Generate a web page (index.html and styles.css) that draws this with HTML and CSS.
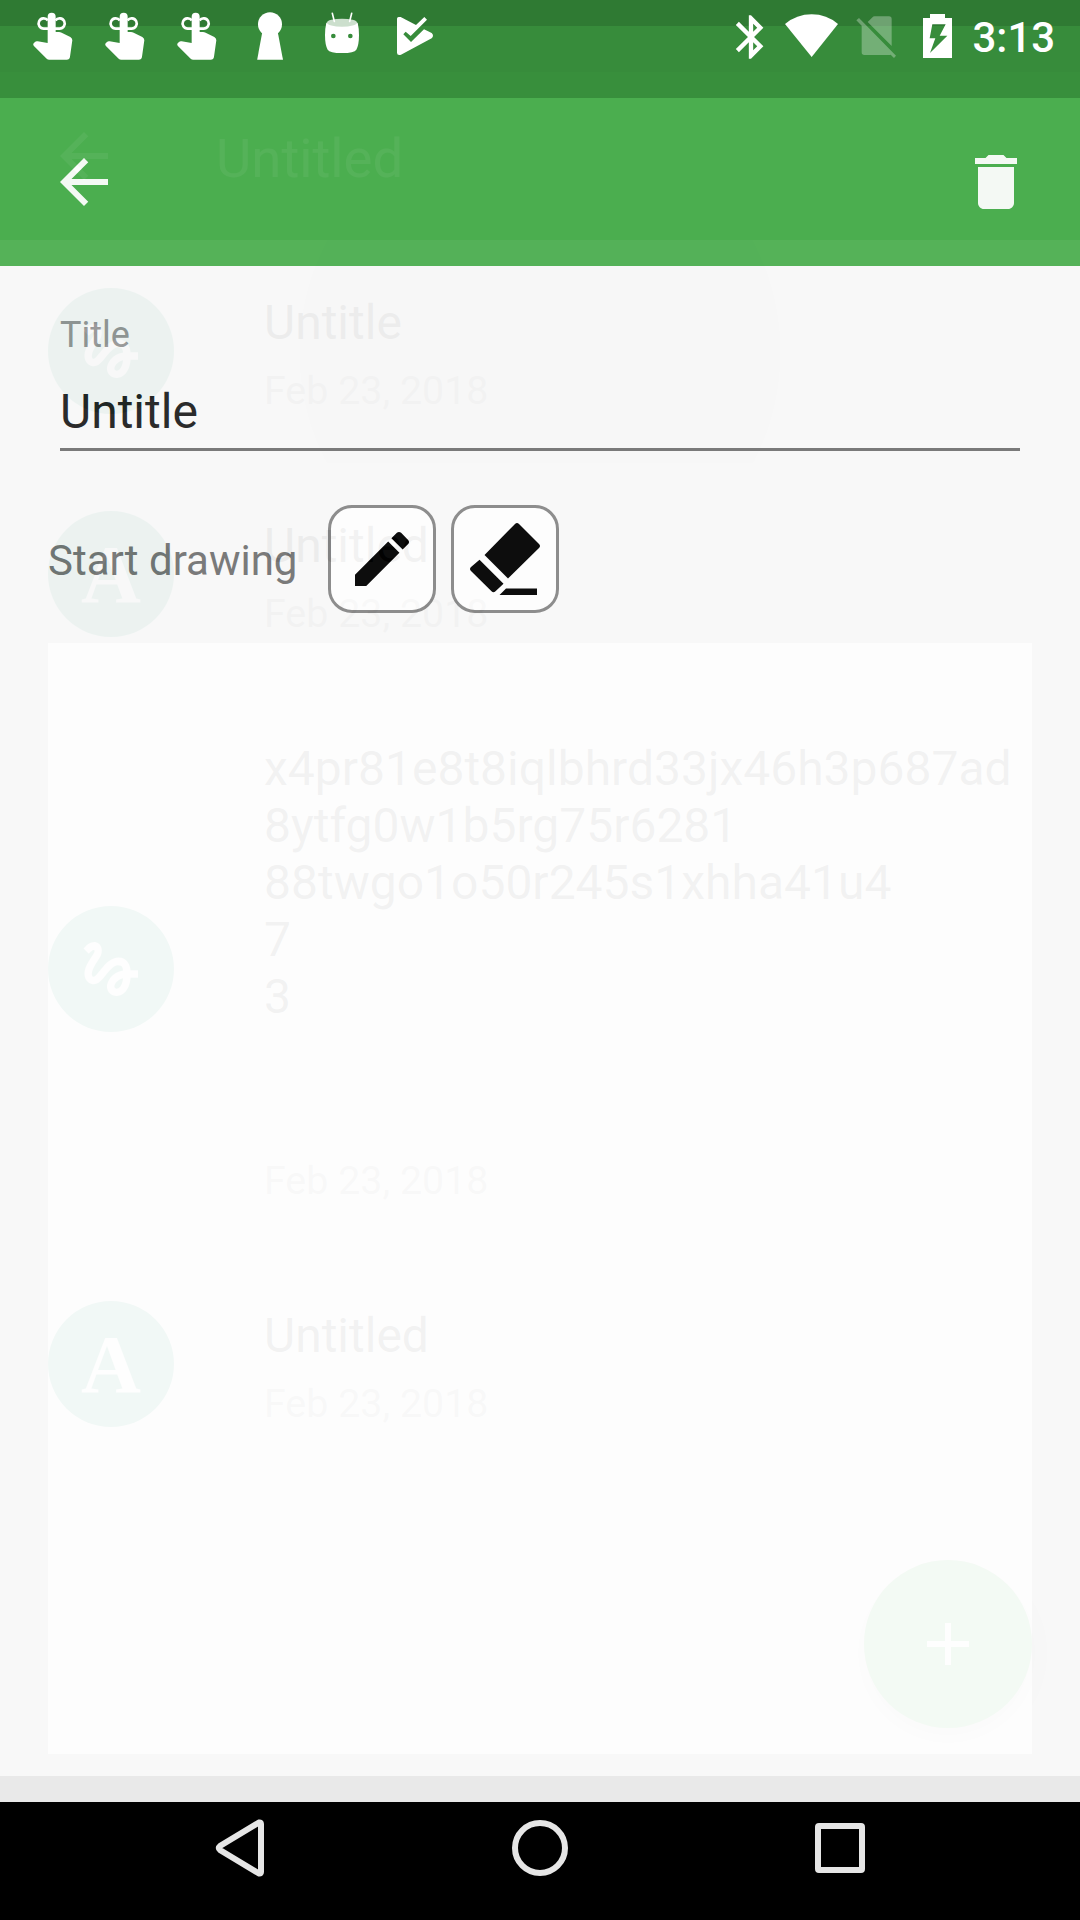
FILE: index.html
```html
<!DOCTYPE html>
<html lang="en">
<head>
<meta charset="utf-8">
<title>Notes</title>
<link rel="stylesheet" href="styles.css">
</head>
<body>
<svg class="defs" aria-hidden="true">
  <symbol id="back" viewBox="0 0 24 24"><path d="M20 11H7.830l5.590-5.590L12 4l-8 8 8 8 1.410-1.410L7.830 13H20v-2z"/></symbol>
  <symbol id="gesture" viewBox="0 0 24 24"><path d="M4.59 6.89c.7-.71 1.4-1.35 1.71-1.22.5.2 0 1.03-.3 1.52-.25.42-2.86 3.89-2.86 6.31 0 1.28.48 2.34 1.34 2.98.75.56 1.74.73 2.64.46 1.07-.31 1.95-1.4 3.06-2.77 1.21-1.49 2.83-3.44 4.08-3.44 1.63 0 1.65 1.01 1.76 1.79-3.78.64-5.38 3.67-5.38 5.37 0 1.7 1.44 3.09 3.21 3.09 1.63 0 4.29-1.33 4.69-6.1H21v-2.5h-2.47c-.15-1.65-1.09-4.2-4.03-4.2-2.25 0-4.18 1.91-4.94 2.84-.58.73-2.06 2.48-2.29 2.72-.25.3-.68.84-1.11.84-.45 0-.72-.83-.36-1.92.35-1.09 1.4-2.86 1.85-3.52.78-1.14 1.3-1.92 1.3-3.28C8.95 3.69 7.31 3 6.44 3 5.12 3 3.97 4 3.72 4.25c-.36.36-.66.66-.88.93l1.75 1.71zm9.29 11.66c-.31 0-.74-.26-.74-.72 0-.6.73-2.2 2.87-2.76-.3 2.69-1.43 3.48-2.13 3.48z"/></symbol>
  <symbol id="reminder" viewBox="51 0 216 216">
    <path d="M143 129V50a12 12 0 0 1 24 0V96h10q4 0 8 2L211 111q6 4 6 10L210 170q-1 9-10 9H148q-5 0-8-3L101 137q-3-4 0-7l4-4q3-3 8-2z"/>
    <path fill="none" stroke="#fff" stroke-width="8" d="M145 86H131.500a15.500 15.500 0 1 1 12-25M165 86H178.500a15.500 15.500 0 1 0-12-25"/>
  </symbol>
</svg>
<div class="device">

  <section class="screen list-screen">
    <div class="list-status"></div>
    <header class="toolbar">
      <svg class="icon"><use href="#back"/></svg>
      <h1 class="toolbar-title">Untitled</h1>
    </header>
    <ul class="notes">
      <li class="note pressed">
        <span class="avatar"><svg class="icon"><use href="#gesture"/></svg></span>
        <div class="note-text"><p class="note-title">Untitle</p><p class="note-date">Feb 23, 2018</p></div>
      </li>
      <li class="note">
        <span class="avatar">A</span>
        <div class="note-text"><p class="note-title">Untitled</p><p class="note-date">Feb 23, 2018</p></div>
      </li>
      <li class="note note-long">
        <span class="avatar"><svg class="icon"><use href="#gesture"/></svg></span>
        <div class="note-text"><p class="note-title">x4pr81e8t8iqlbhrd33jx46h3p687ad<br>8ytfg0w1b5rg75r6281<br>88twgo1o50r245s1xhha41u4<br>7<br>3<br><br>&nbsp;</p><p class="note-date">Feb 23, 2018</p></div>
      </li>
      <li class="note">
        <span class="avatar">A</span>
        <div class="note-text"><p class="note-title">Untitled</p><p class="note-date">Feb 23, 2018</p></div>
      </li>
    </ul>
    <div class="fab"><svg class="icon" viewBox="0 0 24 24"><path d="M19 13h-6v6h-2v-6H5v-2h6V5h2v6h6v2z"/></svg></div>
  </section>

  <section class="screen editor">
    <div class="editor-status"></div>
    <header class="toolbar editor-toolbar">
      <svg class="icon"><use href="#back"/></svg>
      <svg class="icon" viewBox="0 0 24 24"><path d="M6 19c0 1.100.9 2 2 2h8c1.100 0 2-.9 2-2V7H6v12zM19 4h-3.500l-1-1h-5l-1 1H5v2h14V4z"/></svg>
    </header>
    <main class="form">
      <div class="field">
        <div class="field-label">Title</div>
        <div class="field-value">Untitle</div>
      </div>
      <div class="tools">
        <span class="tools-label">Start drawing</span>
        <span class="tool"><svg class="icon" viewBox="0 0 24 24"><path d="M3 17.250V21h3.750L17.810 9.940l-3.750-3.750L3 17.250zM20.710 7.040c.39-.39.39-1.020 0-1.410l-2.340-2.340c-.39-.39-1.020-.39-1.410 0l-1.830 1.830 3.750 3.750 1.830-1.830z"/></svg></span>
        <span class="tool"><svg class="tool-wide" viewBox="0 0 108 108"><path d="M64 19q2-2 4 0L88 39q2 2 0 4L57 73.500 33.500 50zM28.500 54.700L52.500 78.700 44.500 86.300q-2 2-4 0L20 66q-2-2 0-4zM55 83.500H86V90H48.500z"/></svg></span>
      </div>
      <div class="canvas"></div>
    </main>
  </section>

  <div class="screen system">
    <div class="status">
      <svg class="note-icon"><use href="#reminder"/></svg>
      <svg class="note-icon"><use href="#reminder"/></svg>
      <svg class="note-icon"><use href="#reminder"/></svg>
      <svg class="note-icon" viewBox="699 0 216 216"><circle cx="810" cy="73" r="36"/><path d="M787 95L771.500 179H849L833 95z"/></svg>
      <svg class="note-icon" viewBox="915 0 216 216">
        <path fill-rule="evenodd" d="M979 68Q975 85 975 105q0 30 8 44q6 10 43 10t43-10q8-14 8-44q0-20-4-37zM993 108a7 7 0 1 0 14 0a7 7 0 1 0-14 0zM1044 108a7 7 0 1 0 14 0a7 7 0 1 0-14 0z"/>
        <ellipse class="droid-lid" cx="1026" cy="68" rx="45" ry="12"/>
        <path class="antenna" d="M997 40l6 24M1055 40l-6 24"/>
      </svg>
      <svg class="note-icon" viewBox="1131 0 216 216"><path d="M1191 56q0-5 5-5h6L1248 75 1273 51 1281 59 1232 108 1217 95 1210 103 1233 126 1272 88 1295 99q8 8 0 16L1203 164q-12 3-12-6z"/></svg>
      <div class="status-right">
        <svg class="bluetooth" viewBox="0 0 24 24"><path d="M17.710 7.710L12 2h-1v7.590L6.410 5 5 6.410 10.590 12 5 17.590 6.410 19 11 14.410V22h1l5.710-5.710-4.300-4.290 4.300-4.290zM13 5.830l1.880 1.880L13 9.590V5.830zm1.880 10.460L13 18.170v-3.760l1.880 1.880z"/></svg>
        <svg class="wifi" viewBox="231 0 204 216"><path d="M335 171L255 72Q290 43 335 43T414 72z"/></svg>
        <svg class="sim" viewBox="435 0 189 216"><path d="M503 66L516 53q4-4 8-4h43q8 0 8 8V138zM477 54L588 167 582 174 572 164Q570 165 567 165H493q-8 0-8-8V77L469 61z"/></svg>
        <svg class="battery" viewBox="624 0 171 216"><path fill-rule="evenodd" d="M669 54H690V42H735V54H756V174H669zM697 73H737L719 107H742L690 159 706 115H689z"/></svg>
        <span class="clock">3:13</span>
      </div>
    </div>
    <nav class="nav">
      <svg viewBox="0 0 60 60"><path d="M10 28Q7.500 30 10 32L49 55.500Q51 56 51 54V6Q51 4 49 4.500z"/></svg>
      <svg viewBox="0 0 60 60"><circle cx="30" cy="30" r="25"/></svg>
      <svg viewBox="0 0 60 60"><rect x="8" y="8" width="44" height="44" rx="1"/></svg>
    </nav>
  </div>
</div>
</body>
</html>
```
FILE: styles.css
```css
* { box-sizing: border-box; }

body, h1, p, ul { margin: 0; padding: 0; }

body {
  font-family: Roboto, "Noto Sans", sans-serif;
  background: #000;
}

svg { display: block; flex: none; }

.defs { display: none; }

.device {
  display: grid;
  grid-template: 1920px / 1080px;
  overflow: hidden;
}

/* Every screen shares the single grid cell, stacked in source order. */
.screen {
  grid-area: 1 / 1;
  display: flex;
  flex-direction: column;
}

.icon { width: 72px; height: 72px; fill: currentColor; }

.toolbar {
  height: 168px;
  flex: none;
  display: flex;
  align-items: center;
  padding: 0 48px;
  background: #4caf50;
  color: #fff;
}

/* Note list, seen through the editor while it opens */
.list-screen {
  position: relative;
  height: 1802px;
  background: #e9e9e9;
}

.list-status { height: 72px; flex: none; background: #2f7a33; }

.list-screen .toolbar { background: #47a34b; color: #eee; gap: 96px; }

.toolbar-title { padding-top: 4px; font-size: 54.500px; font-weight: 400; line-height: 64px; }

.notes { list-style: none; }

.note {
  height: 223px;
  display: flex;
  align-items: center;
  gap: 90px;
  padding: 0 48px;
}

.note-long { height: 567px; }

.pressed {
  background: radial-gradient(circle at 540px 112px, rgba(0, 0, 0, .06) 239.500px, transparent 240.500px);
}

.avatar {
  width: 126px;
  height: 126px;
  flex: none;
  display: flex;
  align-items: center;
  justify-content: center;
  margin-bottom: 2px;
  border-radius: 50%;
  background: #1c906c;
  color: #eee;
  font: bold 83px/124px "Liberation Serif", serif;
}

.note-text { padding-top: 5px; }

.note-title { font-size: 48px; line-height: 57px; color: rgba(0, 0, 0, .87); }

.note-date { margin-top: 17px; font-size: 39.400px; line-height: 46px; color: rgba(0, 0, 0, .42); }

.note-long .note-date { margin-top: 19px; }

.fab {
  position: absolute;
  right: 48px;
  bottom: 74px;
  width: 168px;
  height: 168px;
  display: flex;
  align-items: center;
  justify-content: center;
  border-radius: 50%;
  background: #3caa44;
  color: #eee;
  box-shadow: 0 9px 18px rgba(0, 0, 0, .22);
}

/* Editor */
.editor {
  height: 1750px;
  margin-top: 26px;
  background: #f9f9f9;
  opacity: .94;
}

.editor-status { height: 72px; flex: none; background: #388e3c; }

.editor-toolbar { justify-content: space-between; }

.form { flex: 1; display: flex; flex-direction: column; padding: 48px 48px 22px; }

.field { margin: 0 12px; border-bottom: 3px solid #747474; padding-bottom: 8px; }

.field-label { font-size: 36px; line-height: 42px; color: #959595; }

.field-value { margin-top: 27px; font-size: 48px; line-height: 57px; color: #202020; }

.tools { display: flex; align-items: center; margin-top: 54px; }

.tools-label { width: 280px; padding-top: 3px; font-size: 42px; line-height: 49px; color: #747474; }

.tool {
  width: 108px;
  height: 108px;
  display: flex;
  align-items: center;
  justify-content: center;
  border: 3px solid #888;
  border-radius: 24px;
  background: #fff;
  color: #000;
}

.tool + .tool { margin-left: 15px; }

.tool-wide { width: 108px; height: 108px; }

.canvas { flex: 1; margin-top: 30px; background: #fff; }

/* System bars */
.system { justify-content: space-between; z-index: 1; }

.status { display: flex; height: 72px; padding-left: 17px; fill: #fff; }

.note-icon { width: 72px; height: 72px; }

.droid-lid { fill: #ccdfcd; }

.antenna { fill: none; stroke: #fff; stroke-width: 5; stroke-linecap: round; }

.status-right { display: flex; margin-left: auto; width: 355px; }

.bluetooth { width: 52px; height: 52px; margin-top: 10.500px; }
.wifi { width: 68px; height: 72px; }
.sim { width: 63px; height: 72px; opacity: .3; }
.battery { width: 57px; height: 72px; }

.clock {
  margin: 13px 0 0 7.500px;
  font-size: 42px;
  font-weight: 500;
  line-height: 50px;
  color: #fff;
}

.nav {
  height: 118px;
  display: grid;
  grid-template-columns: repeat(3, 300px);
  justify-content: center;
  justify-items: center;
  padding-top: 16px;
  background: #000;
}

.nav svg {
  width: 60px;
  height: 60px;
  fill: none;
  stroke: #e6e6e6;
  stroke-width: 6;
}
```
